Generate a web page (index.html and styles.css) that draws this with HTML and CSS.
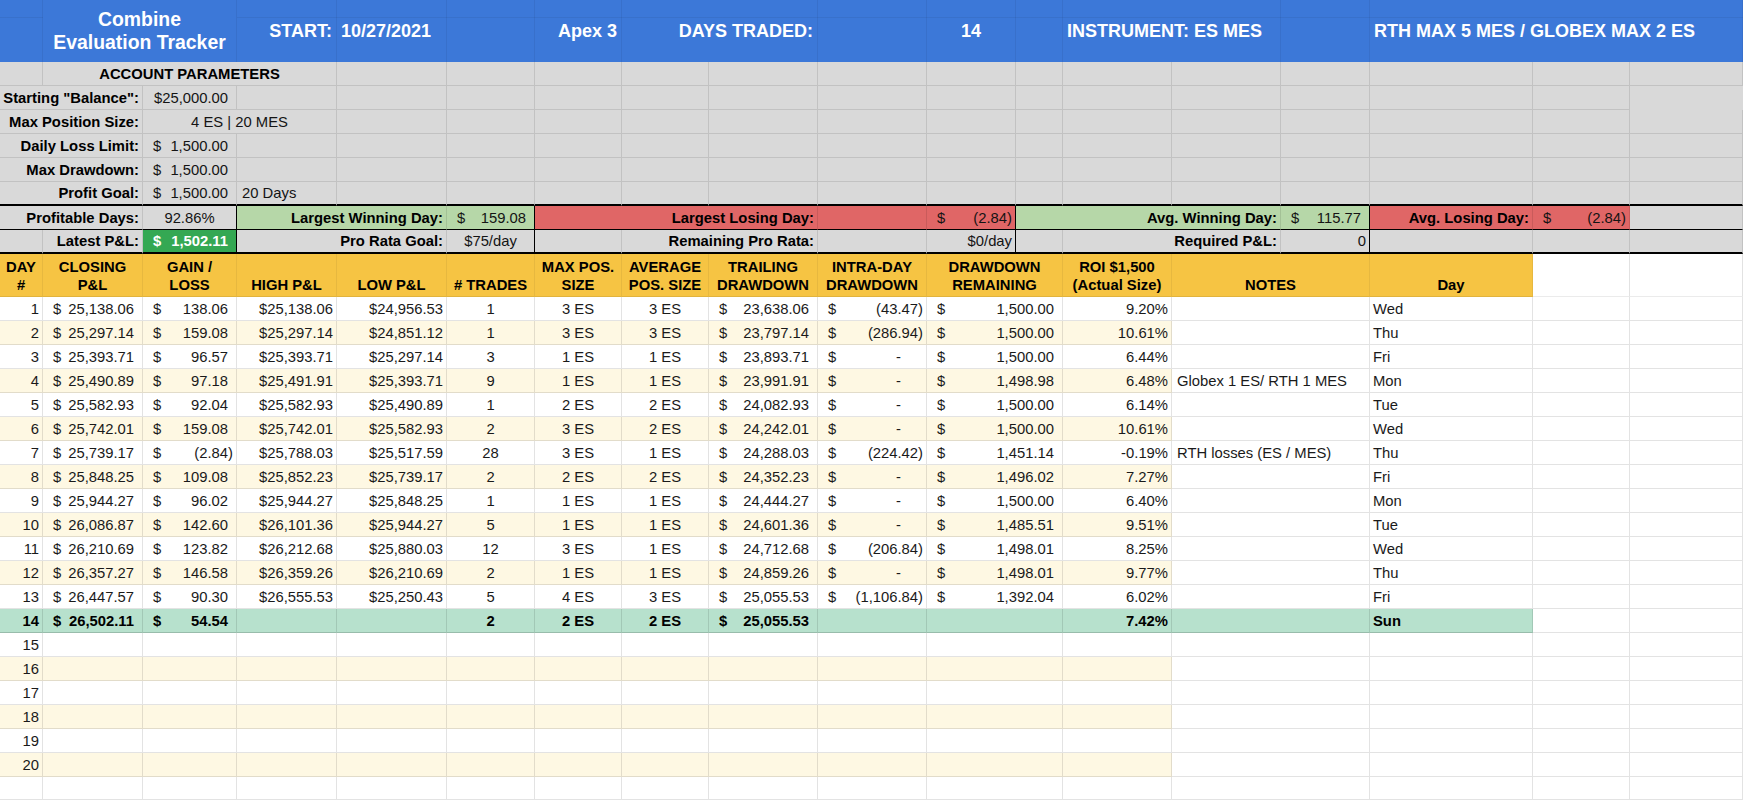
FILE: index.html
```html
<!DOCTYPE html>
<html lang="en">
<head>
<meta charset="utf-8">
<title>Combine Evaluation Tracker</title>
<link rel="stylesheet" href="styles.css">
</head>
<body>
<div class="sheet">

  <div class="row banner">
    <div class="c"></div>
    <div class="c s2 ctr title"><span>Combine<br>Evaluation Tracker</span></div>
    <div class="c r">START:</div>
    <div class="c">10/27/2021</div>
    <div class="c"></div>
    <div class="c r">Apex 3</div>
    <div class="c s2 r">DAYS TRADED:</div>
    <div class="c"></div>
    <div class="c ctr">14</div>
    <div class="c"></div>
    <div class="c s2">INSTRUMENT: ES MES</div>
    <div class="c"></div>
    <div class="c s3">RTH MAX 5 MES / GLOBEX MAX 2 ES</div>
  </div>

  <div class="row gray">
    <div class="c"></div>
    <div class="c s3 ctr b">ACCOUNT PARAMETERS</div>
    <div class="c"></div><div class="c"></div><div class="c"></div><div class="c"></div><div class="c"></div><div class="c"></div><div class="c"></div><div class="c"></div><div class="c"></div><div class="c"></div><div class="c"></div><div class="c"></div><div class="c"></div><div class="c"></div>
  </div>

  <div class="row gray">
    <div class="c s2 r b">Starting "Balance":</div>
    <div class="c r p8">$25,000.00</div>
    <div class="c"></div><div class="c"></div><div class="c"></div><div class="c"></div><div class="c"></div><div class="c"></div><div class="c"></div><div class="c"></div><div class="c"></div><div class="c"></div><div class="c"></div><div class="c"></div><div class="c"></div><div class="c"></div>
  </div>

  <div class="row gray">
    <div class="c s2 r b">Max Position Size:</div>
    <div class="c s2 ctr">4 ES | 20 MES</div>
    <div class="c"></div><div class="c"></div><div class="c"></div><div class="c"></div><div class="c"></div><div class="c"></div><div class="c"></div><div class="c"></div><div class="c"></div><div class="c"></div><div class="c"></div><div class="c"></div><div class="c"></div><div class="c"></div>
  </div>

  <div class="row gray">
    <div class="c s2 r b">Daily Loss Limit:</div>
    <div class="c acc"><span>$</span><span>1,500.00</span></div>
    <div class="c"></div><div class="c"></div><div class="c"></div><div class="c"></div><div class="c"></div><div class="c"></div><div class="c"></div><div class="c"></div><div class="c"></div><div class="c"></div><div class="c"></div><div class="c"></div><div class="c"></div><div class="c"></div><div class="c"></div>
  </div>

  <div class="row gray">
    <div class="c s2 r b">Max Drawdown:</div>
    <div class="c acc"><span>$</span><span>1,500.00</span></div>
    <div class="c"></div><div class="c"></div><div class="c"></div><div class="c"></div><div class="c"></div><div class="c"></div><div class="c"></div><div class="c"></div><div class="c"></div><div class="c"></div><div class="c"></div><div class="c"></div><div class="c"></div><div class="c"></div><div class="c"></div>
  </div>

  <div class="row gray goal">
    <div class="c s2 r b">Profit Goal:</div>
    <div class="c acc"><span>$</span><span>1,500.00</span></div>
    <div class="c pl">20 Days</div>
    <div class="c"></div><div class="c"></div><div class="c"></div><div class="c"></div><div class="c"></div><div class="c"></div><div class="c"></div><div class="c"></div><div class="c"></div><div class="c"></div><div class="c"></div><div class="c"></div><div class="c"></div><div class="c"></div>
  </div>

  <div class="row gray summary">
    <div class="c s2 r b">Profitable Days:</div>
    <div class="c ctr edge">92.86%</div>
    <div class="c s2 r b win">Largest Winning Day:</div>
    <div class="c acc win edge"><span>$</span><span>159.08</span></div>
    <div class="c s3 r b loss">Largest Losing Day:</div>
    <div class="c loss"></div>
    <div class="c acc neg loss edge"><span>$</span><span>(2.84)</span></div>
    <div class="c s3 r b win">Avg. Winning Day:</div>
    <div class="c acc win edge"><span>$</span><span>115.77</span></div>
    <div class="c r b loss">Avg. Losing Day:</div>
    <div class="c acc neg loss"><span>$</span><span>(2.84)</span></div>
    <div class="c"></div>
  </div>

  <div class="row gray summary closing">
    <div class="c"></div>
    <div class="c r b">Latest P&amp;L:</div>
    <div class="c acc latest edge"><span>$</span><span>1,502.11</span></div>
    <div class="c s2 r b">Pro Rata Goal:</div>
    <div class="c ctr edge">$75/day</div>
    <div class="c"></div>
    <div class="c s2 r b">Remaining Pro Rata:</div>
    <div class="c"></div>
    <div class="c r edge">$0/day</div>
    <div class="c"></div>
    <div class="c s2 r b">Required P&amp;L:</div>
    <div class="c r edge">0</div>
    <div class="c"></div><div class="c"></div><div class="c"></div>
  </div>

  <div class="row hdr">
    <div class="c">DAY<br>#</div>
    <div class="c">CLOSING<br>P&amp;L</div>
    <div class="c">GAIN /<br>LOSS</div>
    <div class="c">HIGH P&amp;L</div>
    <div class="c">LOW P&amp;L</div>
    <div class="c"># TRADES</div>
    <div class="c">MAX POS.<br>SIZE</div>
    <div class="c">AVERAGE<br>POS. SIZE</div>
    <div class="c">TRAILING<br>DRAWDOWN</div>
    <div class="c">INTRA-DAY<br>DRAWDOWN</div>
    <div class="c s2">DRAWDOWN<br>REMAINING</div>
    <div class="c">ROI $1,500<br>(Actual Size)</div>
    <div class="c s2">NOTES</div>
    <div class="c">Day</div>
    <div class="c blank"></div>
    <div class="c blank"></div>
  </div>

  <div class="row data">
    <div class="c r">1</div>
    <div class="c acc"><span>$</span><span>25,138.06</span></div>
    <div class="c acc"><span>$</span><span>138.06</span></div>
    <div class="c r">$25,138.06</div>
    <div class="c r">$24,956.53</div>
    <div class="c ctr">1</div>
    <div class="c ctr">3 ES</div>
    <div class="c ctr">3 ES</div>
    <div class="c acc"><span>$</span><span>23,638.06</span></div>
    <div class="c acc neg"><span>$</span><span>(43.47)</span></div>
    <div class="c acc s2"><span>$</span><span>1,500.00</span></div>
    <div class="c r">9.20%</div>
    <div class="c s2"></div>
    <div class="c">Wed</div>
    <div class="c"></div>
    <div class="c"></div>
  </div>

  <div class="row data even">
    <div class="c r">2</div>
    <div class="c acc"><span>$</span><span>25,297.14</span></div>
    <div class="c acc"><span>$</span><span>159.08</span></div>
    <div class="c r">$25,297.14</div>
    <div class="c r">$24,851.12</div>
    <div class="c ctr">1</div>
    <div class="c ctr">3 ES</div>
    <div class="c ctr">3 ES</div>
    <div class="c acc"><span>$</span><span>23,797.14</span></div>
    <div class="c acc neg"><span>$</span><span>(286.94)</span></div>
    <div class="c acc s2"><span>$</span><span>1,500.00</span></div>
    <div class="c r">10.61%</div>
    <div class="c s2"></div>
    <div class="c">Thu</div>
    <div class="c"></div>
    <div class="c"></div>
  </div>

  <div class="row data">
    <div class="c r">3</div>
    <div class="c acc"><span>$</span><span>25,393.71</span></div>
    <div class="c acc"><span>$</span><span>96.57</span></div>
    <div class="c r">$25,393.71</div>
    <div class="c r">$25,297.14</div>
    <div class="c ctr">3</div>
    <div class="c ctr">1 ES</div>
    <div class="c ctr">1 ES</div>
    <div class="c acc"><span>$</span><span>23,893.71</span></div>
    <div class="c acc dash"><span>$</span><span>-</span></div>
    <div class="c acc s2"><span>$</span><span>1,500.00</span></div>
    <div class="c r">6.44%</div>
    <div class="c s2"></div>
    <div class="c">Fri</div>
    <div class="c"></div>
    <div class="c"></div>
  </div>

  <div class="row data even">
    <div class="c r">4</div>
    <div class="c acc"><span>$</span><span>25,490.89</span></div>
    <div class="c acc"><span>$</span><span>97.18</span></div>
    <div class="c r">$25,491.91</div>
    <div class="c r">$25,393.71</div>
    <div class="c ctr">9</div>
    <div class="c ctr">1 ES</div>
    <div class="c ctr">1 ES</div>
    <div class="c acc"><span>$</span><span>23,991.91</span></div>
    <div class="c acc dash"><span>$</span><span>-</span></div>
    <div class="c acc s2"><span>$</span><span>1,498.98</span></div>
    <div class="c r">6.48%</div>
    <div class="c s2 note">Globex 1 ES/ RTH 1 MES</div>
    <div class="c">Mon</div>
    <div class="c"></div>
    <div class="c"></div>
  </div>

  <div class="row data">
    <div class="c r">5</div>
    <div class="c acc"><span>$</span><span>25,582.93</span></div>
    <div class="c acc"><span>$</span><span>92.04</span></div>
    <div class="c r">$25,582.93</div>
    <div class="c r">$25,490.89</div>
    <div class="c ctr">1</div>
    <div class="c ctr">2 ES</div>
    <div class="c ctr">2 ES</div>
    <div class="c acc"><span>$</span><span>24,082.93</span></div>
    <div class="c acc dash"><span>$</span><span>-</span></div>
    <div class="c acc s2"><span>$</span><span>1,500.00</span></div>
    <div class="c r">6.14%</div>
    <div class="c s2"></div>
    <div class="c">Tue</div>
    <div class="c"></div>
    <div class="c"></div>
  </div>

  <div class="row data even">
    <div class="c r">6</div>
    <div class="c acc"><span>$</span><span>25,742.01</span></div>
    <div class="c acc"><span>$</span><span>159.08</span></div>
    <div class="c r">$25,742.01</div>
    <div class="c r">$25,582.93</div>
    <div class="c ctr">2</div>
    <div class="c ctr">3 ES</div>
    <div class="c ctr">2 ES</div>
    <div class="c acc"><span>$</span><span>24,242.01</span></div>
    <div class="c acc dash"><span>$</span><span>-</span></div>
    <div class="c acc s2"><span>$</span><span>1,500.00</span></div>
    <div class="c r">10.61%</div>
    <div class="c s2"></div>
    <div class="c">Wed</div>
    <div class="c"></div>
    <div class="c"></div>
  </div>

  <div class="row data">
    <div class="c r">7</div>
    <div class="c acc"><span>$</span><span>25,739.17</span></div>
    <div class="c acc neg"><span>$</span><span>(2.84)</span></div>
    <div class="c r">$25,788.03</div>
    <div class="c r">$25,517.59</div>
    <div class="c ctr">28</div>
    <div class="c ctr">3 ES</div>
    <div class="c ctr">1 ES</div>
    <div class="c acc"><span>$</span><span>24,288.03</span></div>
    <div class="c acc neg"><span>$</span><span>(224.42)</span></div>
    <div class="c acc s2"><span>$</span><span>1,451.14</span></div>
    <div class="c r">-0.19%</div>
    <div class="c s2 note">RTH losses (ES / MES)</div>
    <div class="c">Thu</div>
    <div class="c"></div>
    <div class="c"></div>
  </div>

  <div class="row data even">
    <div class="c r">8</div>
    <div class="c acc"><span>$</span><span>25,848.25</span></div>
    <div class="c acc"><span>$</span><span>109.08</span></div>
    <div class="c r">$25,852.23</div>
    <div class="c r">$25,739.17</div>
    <div class="c ctr">2</div>
    <div class="c ctr">2 ES</div>
    <div class="c ctr">2 ES</div>
    <div class="c acc"><span>$</span><span>24,352.23</span></div>
    <div class="c acc dash"><span>$</span><span>-</span></div>
    <div class="c acc s2"><span>$</span><span>1,496.02</span></div>
    <div class="c r">7.27%</div>
    <div class="c s2"></div>
    <div class="c">Fri</div>
    <div class="c"></div>
    <div class="c"></div>
  </div>

  <div class="row data">
    <div class="c r">9</div>
    <div class="c acc"><span>$</span><span>25,944.27</span></div>
    <div class="c acc"><span>$</span><span>96.02</span></div>
    <div class="c r">$25,944.27</div>
    <div class="c r">$25,848.25</div>
    <div class="c ctr">1</div>
    <div class="c ctr">1 ES</div>
    <div class="c ctr">1 ES</div>
    <div class="c acc"><span>$</span><span>24,444.27</span></div>
    <div class="c acc dash"><span>$</span><span>-</span></div>
    <div class="c acc s2"><span>$</span><span>1,500.00</span></div>
    <div class="c r">6.40%</div>
    <div class="c s2"></div>
    <div class="c">Mon</div>
    <div class="c"></div>
    <div class="c"></div>
  </div>

  <div class="row data even">
    <div class="c r">10</div>
    <div class="c acc"><span>$</span><span>26,086.87</span></div>
    <div class="c acc"><span>$</span><span>142.60</span></div>
    <div class="c r">$26,101.36</div>
    <div class="c r">$25,944.27</div>
    <div class="c ctr">5</div>
    <div class="c ctr">1 ES</div>
    <div class="c ctr">1 ES</div>
    <div class="c acc"><span>$</span><span>24,601.36</span></div>
    <div class="c acc dash"><span>$</span><span>-</span></div>
    <div class="c acc s2"><span>$</span><span>1,485.51</span></div>
    <div class="c r">9.51%</div>
    <div class="c s2"></div>
    <div class="c">Tue</div>
    <div class="c"></div>
    <div class="c"></div>
  </div>

  <div class="row data">
    <div class="c r">11</div>
    <div class="c acc"><span>$</span><span>26,210.69</span></div>
    <div class="c acc"><span>$</span><span>123.82</span></div>
    <div class="c r">$26,212.68</div>
    <div class="c r">$25,880.03</div>
    <div class="c ctr">12</div>
    <div class="c ctr">3 ES</div>
    <div class="c ctr">1 ES</div>
    <div class="c acc"><span>$</span><span>24,712.68</span></div>
    <div class="c acc neg"><span>$</span><span>(206.84)</span></div>
    <div class="c acc s2"><span>$</span><span>1,498.01</span></div>
    <div class="c r">8.25%</div>
    <div class="c s2"></div>
    <div class="c">Wed</div>
    <div class="c"></div>
    <div class="c"></div>
  </div>

  <div class="row data even">
    <div class="c r">12</div>
    <div class="c acc"><span>$</span><span>26,357.27</span></div>
    <div class="c acc"><span>$</span><span>146.58</span></div>
    <div class="c r">$26,359.26</div>
    <div class="c r">$26,210.69</div>
    <div class="c ctr">2</div>
    <div class="c ctr">1 ES</div>
    <div class="c ctr">1 ES</div>
    <div class="c acc"><span>$</span><span>24,859.26</span></div>
    <div class="c acc dash"><span>$</span><span>-</span></div>
    <div class="c acc s2"><span>$</span><span>1,498.01</span></div>
    <div class="c r">9.77%</div>
    <div class="c s2"></div>
    <div class="c">Thu</div>
    <div class="c"></div>
    <div class="c"></div>
  </div>

  <div class="row data">
    <div class="c r">13</div>
    <div class="c acc"><span>$</span><span>26,447.57</span></div>
    <div class="c acc"><span>$</span><span>90.30</span></div>
    <div class="c r">$26,555.53</div>
    <div class="c r">$25,250.43</div>
    <div class="c ctr">5</div>
    <div class="c ctr">4 ES</div>
    <div class="c ctr">3 ES</div>
    <div class="c acc"><span>$</span><span>25,055.53</span></div>
    <div class="c acc neg"><span>$</span><span>(1,106.84)</span></div>
    <div class="c acc s2"><span>$</span><span>1,392.04</span></div>
    <div class="c r">6.02%</div>
    <div class="c s2"></div>
    <div class="c">Fri</div>
    <div class="c"></div>
    <div class="c"></div>
  </div>

  <div class="row data total">
    <div class="c r">14</div>
    <div class="c acc"><span>$</span><span>26,502.11</span></div>
    <div class="c acc"><span>$</span><span>54.54</span></div>
    <div class="c r"></div>
    <div class="c r"></div>
    <div class="c ctr">2</div>
    <div class="c ctr">2 ES</div>
    <div class="c ctr">2 ES</div>
    <div class="c acc"><span>$</span><span>25,055.53</span></div>
    <div class="c"></div>
    <div class="c s2"></div>
    <div class="c r">7.42%</div>
    <div class="c s2"></div>
    <div class="c">Sun</div>
    <div class="c"></div>
    <div class="c"></div>
  </div>

  <div class="row data">
    <div class="c r">15</div>
    <div class="c"></div><div class="c"></div><div class="c"></div><div class="c"></div><div class="c"></div><div class="c"></div><div class="c"></div><div class="c"></div><div class="c"></div>
    <div class="c s2"></div><div class="c"></div><div class="c s2"></div><div class="c"></div><div class="c"></div><div class="c"></div>
  </div>
  <div class="row data even">
    <div class="c r">16</div>
    <div class="c"></div><div class="c"></div><div class="c"></div><div class="c"></div><div class="c"></div><div class="c"></div><div class="c"></div><div class="c"></div><div class="c"></div>
    <div class="c s2"></div><div class="c"></div><div class="c s2"></div><div class="c"></div><div class="c"></div><div class="c"></div>
  </div>
  <div class="row data">
    <div class="c r">17</div>
    <div class="c"></div><div class="c"></div><div class="c"></div><div class="c"></div><div class="c"></div><div class="c"></div><div class="c"></div><div class="c"></div><div class="c"></div>
    <div class="c s2"></div><div class="c"></div><div class="c s2"></div><div class="c"></div><div class="c"></div><div class="c"></div>
  </div>
  <div class="row data even">
    <div class="c r">18</div>
    <div class="c"></div><div class="c"></div><div class="c"></div><div class="c"></div><div class="c"></div><div class="c"></div><div class="c"></div><div class="c"></div><div class="c"></div>
    <div class="c s2"></div><div class="c"></div><div class="c s2"></div><div class="c"></div><div class="c"></div><div class="c"></div>
  </div>
  <div class="row data">
    <div class="c r">19</div>
    <div class="c"></div><div class="c"></div><div class="c"></div><div class="c"></div><div class="c"></div><div class="c"></div><div class="c"></div><div class="c"></div><div class="c"></div>
    <div class="c s2"></div><div class="c"></div><div class="c s2"></div><div class="c"></div><div class="c"></div><div class="c"></div>
  </div>
  <div class="row data even">
    <div class="c r">20</div>
    <div class="c"></div><div class="c"></div><div class="c"></div><div class="c"></div><div class="c"></div><div class="c"></div><div class="c"></div><div class="c"></div><div class="c"></div>
    <div class="c s2"></div><div class="c"></div><div class="c s2"></div><div class="c"></div><div class="c"></div><div class="c"></div>
  </div>
  <div class="row data filler">
    <div class="c"></div>
    <div class="c"></div><div class="c"></div><div class="c"></div><div class="c"></div><div class="c"></div><div class="c"></div><div class="c"></div><div class="c"></div><div class="c"></div>
    <div class="c s2"></div><div class="c"></div><div class="c s2"></div><div class="c"></div><div class="c"></div><div class="c"></div>
  </div>

</div>
</body>
</html>
```

FILE: styles.css
```css
* { box-sizing: border-box; }

html, body {
  margin: 0;
  padding: 0;
}

body {
  width: 1743px;
  height: 800px;
  overflow: hidden;
  background: #ffffff;
  font-family: "Liberation Sans", Arial, sans-serif;
  font-size: 14.8px;
  color: #141414;
}

.sheet {
  display: flex;
  flex-direction: column;
}

.row {
  display: grid;
  grid-template-columns: 43px 100px 94px 100px 110px 88px 87px 87px 109px 109px 89px 47px 109px 109px 89px 163px 97px 113px;
  height: 24px;
}

.c {
  display: flex;
  align-items: center;
  min-width: 0;
  padding: 0 3px;
  white-space: nowrap;
  border-right: 1px solid rgba(0, 0, 0, 0.11);
  border-bottom: 1px solid rgba(0, 0, 0, 0.11);
}

.s2 { grid-column: span 2; }
.s3 { grid-column: span 3; }

.r { justify-content: flex-end; }
.ctr { justify-content: center; text-align: center; }
.b { font-weight: bold; color: #000; }
.p8 { padding-right: 8px; }
.pl { padding-left: 5px; }

.acc {
  justify-content: space-between;
  padding-left: 10px;
  padding-right: 8px;
}
.acc.neg { padding-right: 3px; }
.acc.dash { padding-right: 25px; }

/* banner */
.banner {
  height: 62px;
  background-color: #3c78d8;
  background-image: linear-gradient(to bottom, transparent 17px, rgba(0, 0, 0, 0.06) 17px, rgba(0, 0, 0, 0.06) 18px, transparent 18px);
  color: #ffffff;
  font-weight: bold;
  font-size: 18px;
}
.banner .c {
  border-right-color: rgba(0, 0, 0, 0.06);
  border-bottom: none;
  padding: 0 4px;
}
.banner .title {
  line-height: 23px;
  font-size: 19.4px;
  background: #3c78d8;
}

/* parameter block */
.gray { background: #d9d9d9; }
.gray .c { border-right-color: rgba(0, 0, 0, 0.1); border-bottom-color: rgba(0, 0, 0, 0.1); }
.goal .c { border-bottom: 2px solid #000; }

.summary .c { border-bottom: 1px solid #000; }
.summary.closing .c { border-bottom-width: 2px; }
.summary .edge { border-right: 1px solid #000; }
.win { background: #b6d7a8; }
.loss { background: #e06666; }
.latest {
  background: #34a853;
  color: #ffffff;
  font-weight: bold;
}

/* column headers */
.hdr { height: 43px; }
.hdr .c {
  align-items: flex-end;
  justify-content: center;
  text-align: center;
  line-height: 18px;
  padding-bottom: 2px;
  font-weight: bold;
  color: #000;
  background: #f6c443;
  border-right-color: rgba(0, 0, 0, 0.06);
  border-bottom-color: rgba(0, 0, 0, 0.08);
}
.hdr .c.blank {
  background: #ffffff;
  border-right-color: rgba(0, 0, 0, 0.11);
}

/* data */
.data .c { color: #1a1a1a; }
.data .note { padding-left: 5px; }
.even > .c:nth-child(-n+12) { background: #fef8e3; }
.total .c { font-weight: bold; color: #000; }
.total > .c:nth-child(-n+14) {
  background: #b7e1cd;
  border-bottom-color: rgba(0, 0, 0, 0.16);
}
.filler { height: 23px; }
```
